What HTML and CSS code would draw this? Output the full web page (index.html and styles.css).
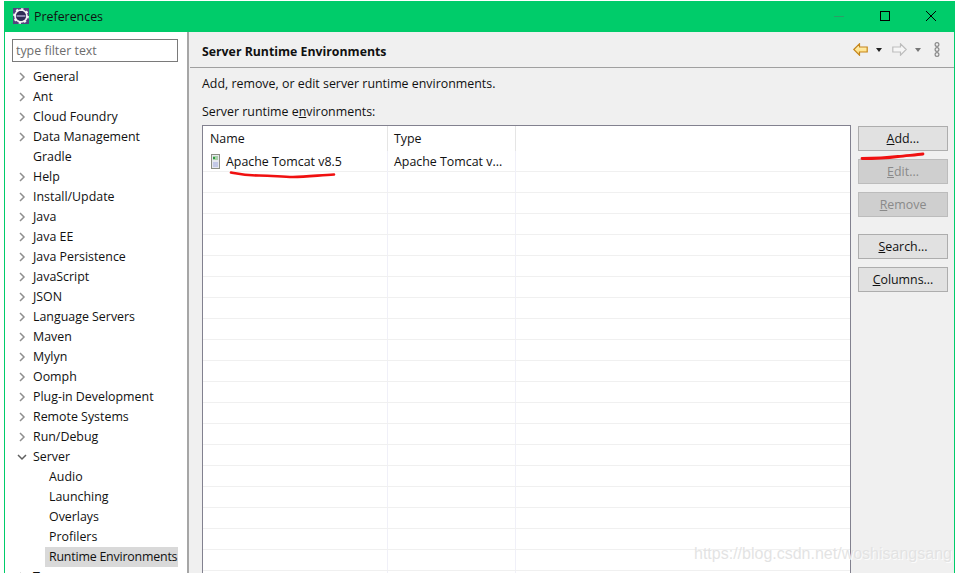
FILE: index.html
```html
<!DOCTYPE html>
<html lang="en">
<head>
<meta charset="utf-8">
<title>Preferences</title>
<link rel="stylesheet" href="styles.css">
</head>
<body>
<div class="window">
  <header class="titlebar">
    <svg class="app-icon" width="16" height="16" viewBox="0 0 17 17">
      <rect width="17" height="17" fill="#54437f"/>
      <circle cx="8.500" cy="8.500" r="6.300" fill="none" stroke="#f2f2f2" stroke-width="2"/>
      <circle cx="8.500" cy="8.500" r="7.300" fill="none" stroke="#f6f6f6" stroke-width="2.200" stroke-dasharray="2.300 3.430"/>
      <circle cx="8.500" cy="8.500" r="5.200" fill="#2f2c55"/>
      <path d="M3.800 8.500H13.200" stroke="#8f8bb0" stroke-width="2"/>
    </svg>
    <span class="title">Preferences</span>
    <div class="caption-buttons">
      <svg width="10" height="10" viewBox="0 0 10 10"><path d="M0 5.500H10" stroke="#2b9f66" stroke-width="1"/></svg>
      <svg width="10" height="10" viewBox="0 0 10 10"><rect x=".5" y=".5" width="9" height="9" fill="none" stroke="#000"/></svg>
      <svg width="10" height="10" viewBox="0 0 10 10"><path d="M0 0L10 10M10 0L0 10" stroke="#000" stroke-width="1"/></svg>
    </div>
  </header>
  <div class="body">
    <aside class="sidebar">
      <input class="filter" type="text" placeholder="type filter text">
      <ul class="tree">
        <li class="node"><svg class="chev" viewBox="0 0 10 10"><path d="M3 1l4 4-4 4"/></svg>General</li>
        <li class="node"><svg class="chev" viewBox="0 0 10 10"><path d="M3 1l4 4-4 4"/></svg>Ant</li>
        <li class="node"><svg class="chev" viewBox="0 0 10 10"><path d="M3 1l4 4-4 4"/></svg>Cloud Foundry</li>
        <li class="node"><svg class="chev" viewBox="0 0 10 10"><path d="M3 1l4 4-4 4"/></svg>Data Management</li>
        <li class="node leaf">Gradle</li>
        <li class="node"><svg class="chev" viewBox="0 0 10 10"><path d="M3 1l4 4-4 4"/></svg>Help</li>
        <li class="node"><svg class="chev" viewBox="0 0 10 10"><path d="M3 1l4 4-4 4"/></svg>Install/Update</li>
        <li class="node"><svg class="chev" viewBox="0 0 10 10"><path d="M3 1l4 4-4 4"/></svg>Java</li>
        <li class="node"><svg class="chev" viewBox="0 0 10 10"><path d="M3 1l4 4-4 4"/></svg>Java EE</li>
        <li class="node"><svg class="chev" viewBox="0 0 10 10"><path d="M3 1l4 4-4 4"/></svg>Java Persistence</li>
        <li class="node"><svg class="chev" viewBox="0 0 10 10"><path d="M3 1l4 4-4 4"/></svg>JavaScript</li>
        <li class="node"><svg class="chev" viewBox="0 0 10 10"><path d="M3 1l4 4-4 4"/></svg>JSON</li>
        <li class="node"><svg class="chev" viewBox="0 0 10 10"><path d="M3 1l4 4-4 4"/></svg>Language Servers</li>
        <li class="node"><svg class="chev" viewBox="0 0 10 10"><path d="M3 1l4 4-4 4"/></svg>Maven</li>
        <li class="node"><svg class="chev" viewBox="0 0 10 10"><path d="M3 1l4 4-4 4"/></svg>Mylyn</li>
        <li class="node"><svg class="chev" viewBox="0 0 10 10"><path d="M3 1l4 4-4 4"/></svg>Oomph</li>
        <li class="node"><svg class="chev" viewBox="0 0 10 10"><path d="M3 1l4 4-4 4"/></svg>Plug-in Development</li>
        <li class="node"><svg class="chev" viewBox="0 0 10 10"><path d="M3 1l4 4-4 4"/></svg>Remote Systems</li>
        <li class="node"><svg class="chev" viewBox="0 0 10 10"><path d="M3 1l4 4-4 4"/></svg>Run/Debug</li>
        <li class="node"><svg class="chev open" viewBox="0 0 10 10"><path d="M1 3l4 4 4-4"/></svg>Server</li>
        <li class="child">Audio</li>
        <li class="child">Launching</li>
        <li class="child">Overlays</li>
        <li class="child">Profilers</li>
        <li class="child selected">Runtime Environments</li>
        <li class="node"><svg class="chev" viewBox="0 0 10 10"><path d="M3 1l4 4-4 4"/></svg>Team</li>
      </ul>
    </aside>
    <div class="sash"></div>
    <main class="content">
      <div class="page-head">
        <h1 class="page-title">Server Runtime Environments</h1>
        <div class="nav-tools">
          <svg class="arrow" width="15" height="13" viewBox="0 0 15 13"><defs><linearGradient id="gold" x1="0" y1="0" x2="0" y2="1"><stop offset="0" stop-color="#fff6c8"/><stop offset="1" stop-color="#ffd86a"/></linearGradient></defs><path d="M.8 6.500L6.500 .8v3.200h7.700v5H6.500v3.200z" fill="url(#gold)" stroke="#c5861c" stroke-width="1.200"/></svg>
          <span class="drop dark"></span>
          <svg class="arrow fwd" width="15" height="13" viewBox="0 0 15 13"><path d="M14.200 6.500L8.500 .8v3.200H.8v5h7.700v3.200z" fill="#f6f6f6" stroke="#bdbdbd" stroke-width="1.200"/></svg>
          <span class="drop grey"></span>
          <svg class="rings" width="6" height="15" viewBox="0 0 6 15"><g fill="none" stroke="#8a8a8a" stroke-width="1.200"><circle cx="3" cy="2.500" r="1.900"/><circle cx="3" cy="7.500" r="1.900"/><circle cx="3" cy="12.500" r="1.900"/></g></svg>
        </div>
      </div>
      <div class="page-body">
        <p class="desc">Add, remove, or edit server runtime environments.</p>
        <p class="label">Server runtime e<u>n</u>vironments:</p>
        <div class="table-area">
          <div class="table">
            <div class="thead"><span class="c1">Name</span><span class="c2">Type</span><span class="c3"></span></div>
            <div class="row">
              <span class="c1"><svg class="srv" width="9" height="15" viewBox="0 0 9 15"><rect x=".5" y=".5" width="8" height="14" fill="#e6e8ee" stroke="#8b8e84"/><rect x="2" y="2" width="5" height="4" fill="#a9cfa9"/><rect x="2" y="3" width="2" height="2" fill="#2c9a3e"/><rect x="2" y="8" width="5" height="5" fill="#c3c8e6"/></svg>Apache Tomcat v8.5</span>
              <span class="c2">Apache Tomcat v...</span><span class="c3"></span>
            </div>
            <div class="row"><span class="c1"></span><span class="c2"></span><span class="c3"></span></div>
            <div class="row"><span class="c1"></span><span class="c2"></span><span class="c3"></span></div>
            <div class="row"><span class="c1"></span><span class="c2"></span><span class="c3"></span></div>
            <div class="row"><span class="c1"></span><span class="c2"></span><span class="c3"></span></div>
            <div class="row"><span class="c1"></span><span class="c2"></span><span class="c3"></span></div>
            <div class="row"><span class="c1"></span><span class="c2"></span><span class="c3"></span></div>
            <div class="row"><span class="c1"></span><span class="c2"></span><span class="c3"></span></div>
            <div class="row"><span class="c1"></span><span class="c2"></span><span class="c3"></span></div>
            <div class="row"><span class="c1"></span><span class="c2"></span><span class="c3"></span></div>
            <div class="row"><span class="c1"></span><span class="c2"></span><span class="c3"></span></div>
            <div class="row"><span class="c1"></span><span class="c2"></span><span class="c3"></span></div>
            <div class="row"><span class="c1"></span><span class="c2"></span><span class="c3"></span></div>
            <div class="row"><span class="c1"></span><span class="c2"></span><span class="c3"></span></div>
            <div class="row"><span class="c1"></span><span class="c2"></span><span class="c3"></span></div>
            <div class="row"><span class="c1"></span><span class="c2"></span><span class="c3"></span></div>
            <div class="row"><span class="c1"></span><span class="c2"></span><span class="c3"></span></div>
            <div class="row"><span class="c1"></span><span class="c2"></span><span class="c3"></span></div>
            <div class="row"><span class="c1"></span><span class="c2"></span><span class="c3"></span></div>
            <div class="row"><span class="c1"></span><span class="c2"></span><span class="c3"></span></div>
            <div class="row"><span class="c1"></span><span class="c2"></span><span class="c3"></span></div>
          </div>
          <div class="buttons">
            <button class="btn"><u>A</u>dd...</button>
            <button class="btn off"><u>E</u>dit...</button>
            <button class="btn off"><u>R</u>emove</button>
            <button class="btn gap"><u>S</u>earch...</button>
            <button class="btn"><u>C</u>olumns...</button>
          </div>
        </div>
      </div>
    </main>
  </div>
</div>
<svg class="scribble" width="960" height="573" viewBox="0 0 960 573">
  <path d="M231 172.500c8 1.500 14 3 28 3 14 0 22 1.500 34 1.500 14 0 28-2 41-2.500" fill="none" stroke="#f01010" stroke-width="2.600" stroke-linecap="round"/>
  <path d="M862 158.500c14 0 28-1 36-2 8-1 18-1.500 25-2.500" fill="none" stroke="#f01010" stroke-width="2.800" stroke-linecap="round"/>
</svg>
<span class="watermark">https://blog.csdn.net/woshisangsang</span>
</body>
</html>
```
FILE: styles.css
```css
* { box-sizing: border-box; }
html, body { margin: 0; padding: 0; height: 573px; overflow: hidden; background: #fff; }
body { font: 12.400px/20px "Open Sans", "Noto Sans", sans-serif; color: #111; position: relative; }
p, h1, ul { margin: 0; padding: 0; }

.window { margin: 1px 0 0 4px; width: 951px; height: 572px; overflow: hidden; border: 1px solid #00cc6a; border-width: 0 1px; display: flex; flex-direction: column; }
.titlebar { height: 31px; flex: none; background: #00cc6a; display: flex; align-items: center; padding: 0 0 0 9px; margin: 0 -1px; }
.app-icon { flex: none; margin-bottom: 1px; }
.title { margin-left: 5px; font-size: 12.400px; color: #111; }
.caption-buttons { margin-left: auto; display: flex; gap: 36px; padding-right: 19px; padding-bottom: 1px; }
.caption-buttons svg { display: block; }

.body { flex: 1; display: flex; min-height: 0; }
.sidebar { width: 182px; flex: none; background: #fff; padding: 7px 0 0 7px; overflow: hidden; }
.filter { display: block; width: 166px; height: 23px; border: 1px solid #7a7a7a; padding: 0 3px; font: 12.400px "Open Sans", sans-serif; background: #fff; outline: none; }
.filter::placeholder { color: #6d6d6d; opacity: 1; }
.tree { list-style: none; margin-top: 5px; }
.tree li { height: 20px; white-space: nowrap; }
.node { display: flex; align-items: center; padding-left: 5px; }
.leaf { padding-left: 21px; }
.chev { width: 10px; height: 10px; flex: none; margin-right: 6px; fill: none; stroke: #8f8f8f; stroke-width: 1.500; }
.chev.open { stroke: #5f5f5f; }
.child { margin-left: 33px; width: 133px; padding-left: 4px; }
.selected { background: #d9d9d9; letter-spacing: -.2px; }

.sash { width: 3px; flex: none; background: #f0f0f0; border-left: 2px solid #a6a6a6; }
.content { flex: 1; min-width: 0; background: #f0f0f0; display: flex; flex-direction: column; }
.page-head { height: 36px; flex: none; display: flex; align-items: center; justify-content: space-between; border-bottom: 1px solid #a0a0a0; padding: 0 14px 0 12px; }
.page-title { font-size: 12.300px; font-weight: 700; line-height: 20px; padding-top: 4px; }
.nav-tools { display: flex; align-items: center; }
.nav-tools svg { display: block; }
.drop { width: 0; height: 0; border: 3.500px solid transparent; border-top: 4px solid #222; border-bottom: 0; margin-left: 8px; }
.drop.grey { border-top-color: #777; }
.arrow.fwd { margin-left: 10px; }
.rings { margin-left: 13px; }

.page-body { flex: 1; padding: 6px 0 0 12px; min-height: 0; }
.desc { height: 20px; }
.label { height: 20px; margin-top: 8px; }
.table-area { display: flex; gap: 7px; margin-top: 3px; align-items: flex-start; }
.table { width: 649px; flex: none; background: #fff; border: 1px solid #82818f; }
.thead, .row { display: grid; grid-template-columns: 185px 128px 1fr; }
.thead { height: 25px; }
.row { height: 21px; border-bottom: 1px solid #f0f0f0; }
.c1, .c2 { display: flex; align-items: center; padding-left: 7px; border-right: 1px solid #f0f0f8; white-space: nowrap; }
.row .c1, .row .c2 { padding-top: 1px; }
.thead .c1, .thead .c2 { border-right-color: #e5e5e5; }
.c2 { padding-left: 6px; }
.srv { flex: none; margin: -1px 6px 0 1px; }

.buttons { width: 90px; flex: none; display: flex; flex-direction: column; gap: 8px; margin-top: 1px; }
.btn { display: block; height: 25px; width: 90px; padding: 0; background: #e1e1e1; border: 1px solid #adadad; font: 12.400px "Open Sans", sans-serif; color: #111; }
.btn.off { background: #cfcfcf; color: #8a8a8a; border-color: #bcbcbc; }
.btn.gap { margin-top: 9px; }

.scribble { position: absolute; left: 0; top: 0; pointer-events: none; }
.watermark { position: absolute; left: 694px; top: 543px; font: 16px/22px "Liberation Sans", sans-serif; color: rgba(226,226,226,.95); text-shadow: 1px 1px 0 rgba(255,255,255,.8); white-space: nowrap; }
```
